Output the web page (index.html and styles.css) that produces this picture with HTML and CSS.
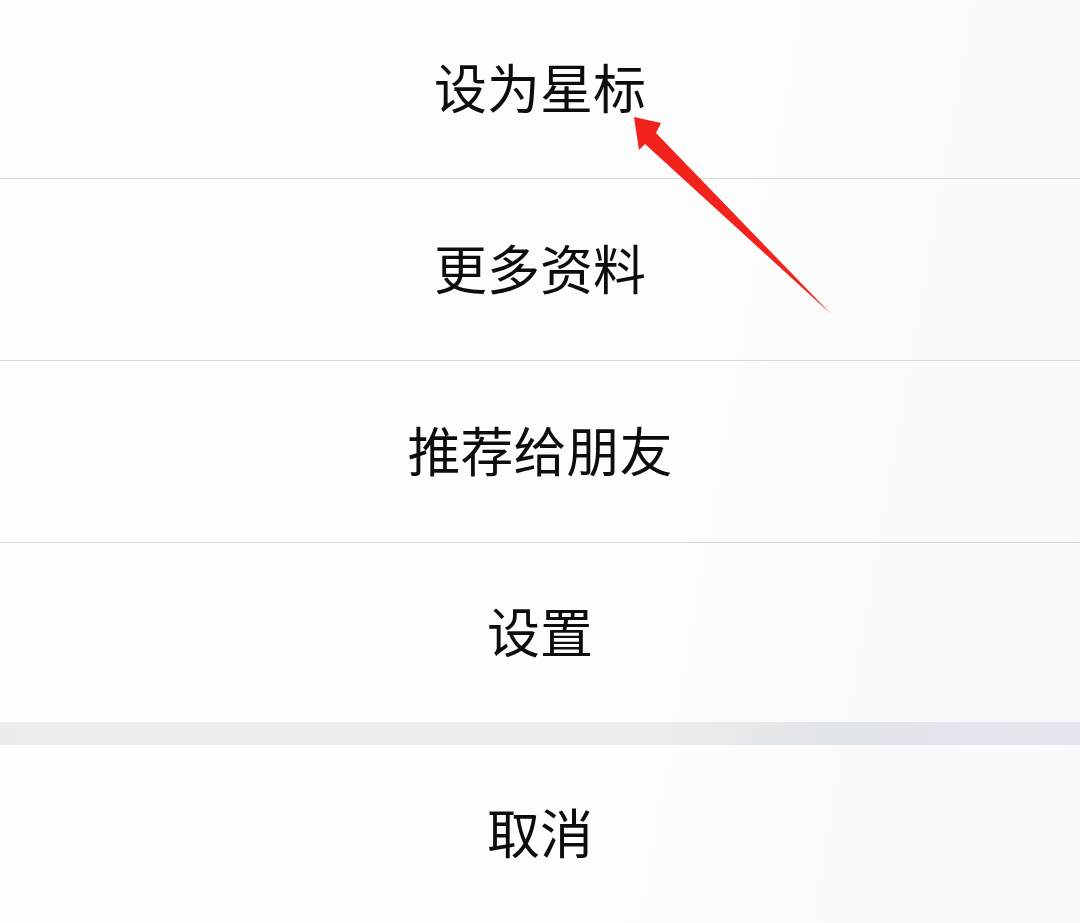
FILE: index.html
```html
<!DOCTYPE html>
<html lang="zh-CN">
<head>
  <meta charset="UTF-8">
  <meta name="viewport" content="width=device-width, initial-scale=1.0">
  <title>操作菜单</title>
  <link rel="stylesheet" href="styles.css">
</head>
<body>
  <div class="sheet">
    <ul class="menu">
      <li class="first">设为星标</li>
      <li>更多资料</li>
      <li>推荐给朋友</li>
      <li class="last">设置</li>
    </ul>
    <div class="gap"></div>
    <div class="cancel">取消</div>

    <!-- 标注箭头 -->
    <svg class="arrow" width="1080" height="923" viewBox="0 0 1080 923">
      <polygon points="634,117 661,123 656,133 831,314 645,144 639,150" fill="#f2231c"/>
    </svg>
  </div>
</body>
</html>
```

FILE: styles.css
```css
*{
  margin: 0;
  padding: 0;
}
li{
  list-style: none;
}
body{
  background: #fdfdfd;
  font-family: "Noto Sans CJK SC", "Noto Sans", sans-serif;
  color: #0d0d0d;
}
.sheet{
  position: relative;
  width: 1080px;
  height: 923px;
  overflow: hidden;
  background: linear-gradient(100deg, #fdfdfd 60%, #f8f9fb 100%);
}
.menu li,
.cancel{
  display: flex;
  align-items: center;
  justify-content: center;
  height: 181px;
  padding-bottom: 6px;
  box-sizing: border-box;
  font-size: 53px;
  border-bottom: 1px solid #dadada;
}
.menu li{
  height: 182px;
}
.menu li.first{
  height: 179px;
}
.menu li.last{
  height: 179px;
  border-bottom: none;
}
.gap{
  height: 23px;
  background: linear-gradient(90deg, #ececec 0%, #ededed 60%, #e0e5ea 78%, #e6e7ee 100%);
}
.cancel{
  height: 178px;
}
.cancel{
  border-bottom: none;
}
.arrow{
  position: absolute;
  left: 0;
  top: 0;
}
```
